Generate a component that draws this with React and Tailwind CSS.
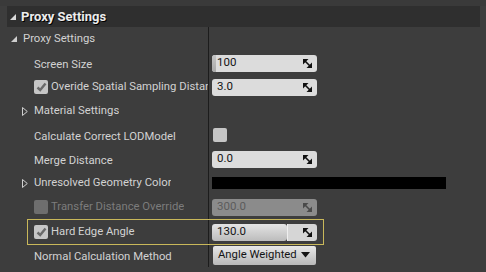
import React from "react";

const SpinIcon = ({ color = "#111" }) => (
  <svg width="9" height="9" viewBox="0 0 9 9">
    <polygon points="0,0 5.5,0 0,5.5" fill={color} />
    <polygon points="9,9 3.5,9 9,3.5" fill={color} />
    <line x1="1.5" y1="1.5" x2="7.5" y2="7.5" stroke={color} strokeWidth="1.6" />
  </svg>
);

const Check = ({ checked, disabled }) => (
  <div
    className={`shrink-0 w-[14px] h-[14px] rounded-[2px] flex items-center justify-center ${
      disabled ? "bg-[#6e6e6e]" : "bg-[#c6c6c6]"
    }`}
  >
    {checked && (
      <svg width="11" height="10" viewBox="0 0 11 10">
        <polyline points="1.5,5.5 4.2,8 9.5,1.5" fill="none" stroke="#6a6a6a" strokeWidth="2.4" />
      </svg>
    )}
  </div>
);

const Spin = ({ value, disabled, fill }) => (
  <div
    className={`relative w-[105px] h-[17px] rounded-[3px] flex items-center justify-between pl-[5px] pr-[5px] text-[11.5px] overflow-hidden ${
      disabled ? "bg-[#8b8b8b] text-[#5c5c5c]" : "bg-[#dcdcdc] text-[#141414]"
    }`}
  >
    {fill && (
      <div className="absolute left-0 top-0 bottom-0 w-[4px] bg-gradient-to-b from-[#c4c4c4] to-[#a8a8a8]" />
    )}
    <span className="relative leading-none">{value}</span>
    <SpinIcon color={disabled ? "#4a4a4a" : "#111"} />
  </div>
);

const Expanded = ({ size = 6, color = "#cfcfcf" }) => (
  <svg width={size} height={size} viewBox="0 0 6 6" className="shrink-0">
    <polygon points="6,0 6,6 0,6" fill={color} />
  </svg>
);

const Collapsed = () => (
  <svg width="6" height="9" viewBox="0 0 6 9" className="shrink-0">
    <polygon points="0.5,0.5 5.3,4.5 0.5,8.5" fill="none" stroke="#cfcfcf" strokeWidth="1" />
  </svg>
);

const Row = ({ left, right, className = "" }) => (
  <div className={`relative flex h-[24px] ${className}`}>
    <div className="w-[208px] shrink-0 flex items-center overflow-hidden whitespace-nowrap">{left}</div>
    <div className="w-px shrink-0 bg-[#1c1c1c]" />
    <div className="flex-1 flex items-center pl-[3px]">{right}</div>
  </div>
);

const Label = ({ children, dim }) => (
  <span
    className={`min-w-0 overflow-hidden whitespace-nowrap text-[11.3px] ${
      dim ? "text-[#7c7c7c]" : "text-[#d2d2d2]"
    }`}
  >
    {children}
  </span>
);

export default function App() {
  return (
    <div className="relative w-[486px] h-[272px] bg-[#3d3d3d] overflow-hidden font-['Roboto',sans-serif]">
      <div className="h-[6px] bg-[#3a3a3a]" />
      <div className="ml-[7px] w-[473px] h-[21px] bg-[#2f2f2f] flex items-center pl-[3px] gap-[5px]">
        <Expanded size={6} color="#d8d8d8" />
        <span className="text-[13px] font-bold text-[#ececec] [text-shadow:1px_1px_0_#000]">
          Proxy Settings
        </span>
      </div>
      <div className="flex flex-col">
        <Row
          left={
            <div className="flex items-center pl-[11px] gap-[6px]">
              <Expanded />
              <Label>Proxy Settings</Label>
            </div>
          }
        />
        <Row
          left={<div className="pl-[34px]"><Label>Screen Size</Label></div>}
          right={<Spin value="100" fill />}
        />
        <Row
          left={
            <div className="flex items-center pl-[34px] gap-[3px] min-w-0 w-full">
              <Check checked />
              <Label>Overide Spatial Sampling Distance</Label>
            </div>
          }
          right={<Spin value="3.0" />}
        />
        <Row
          left={
            <div className="flex items-center pl-[22px] gap-[6px]">
              <Collapsed />
              <Label>Material Settings</Label>
            </div>
          }
        />
        <Row
          left={<div className="pl-[34px]"><Label>Calculate Correct LODModel</Label></div>}
          right={<div className="ml-px"><Check /></div>}
        />
        <Row
          left={<div className="pl-[34px]"><Label>Merge Distance</Label></div>}
          right={<Spin value="0.0" />}
        />
        <Row
          left={
            <div className="flex items-center pl-[22px] gap-[6px]">
              <Collapsed />
              <Label>Unresolved Geometry Color</Label>
            </div>
          }
          right={<div className="w-[234px] h-[12px] bg-black" />}
        />
        <Row
          left={
            <div className="flex items-center pl-[34px] gap-[3px]">
              <Check disabled />
              <Label dim>Transfer Distance Override</Label>
            </div>
          }
          right={<Spin value="300.0" disabled />}
        />
        <Row
          className="mt-[1px]"
          left={
            <div className="flex items-center pl-[34px] gap-[3px]">
              <Check checked />
              <Label>Hard Edge Angle</Label>
            </div>
          }
          right={
            <div className="w-[105px] h-[17px] rounded-[3px] overflow-hidden flex text-[11.5px] text-[#141414]">
              <div className="w-[75px] h-full bg-gradient-to-b from-[#e4e4e4] to-[#bcbcbc] flex items-center pl-[5px] rounded-r-[3px]">
                130.0
              </div>
              <div className="flex-1 bg-[#d6d6d6] border-l border-[#eeeeee] flex items-center justify-end pr-[5px]">
                <SpinIcon />
              </div>
            </div>
          }
        />
        <Row
          className="-mt-[1px]"
          left={<div className="pl-[34px]"><Label>Normal Calculation Method</Label></div>}
          right={
            <div className="ml-px w-[103px] h-[19px] rounded-[2px] bg-gradient-to-b from-[#e8e8e8] to-[#b9b9b9] flex items-center justify-between pl-[5px] pr-[6px] text-[11.3px] text-[#141414] whitespace-nowrap">
              <span>Angle Weighted</span>
              <svg width="9" height="6" viewBox="0 0 9 6" className="shrink-0">
                <polygon points="0,0 9,0 4.5,5.5" fill="#141414" />
              </svg>
            </div>
          }
        />
      </div>
      <div className="absolute left-[27px] top-[219px] w-[297px] h-[26px] border border-[#c9b85a] pointer-events-none" />
    </div>
  );
}
